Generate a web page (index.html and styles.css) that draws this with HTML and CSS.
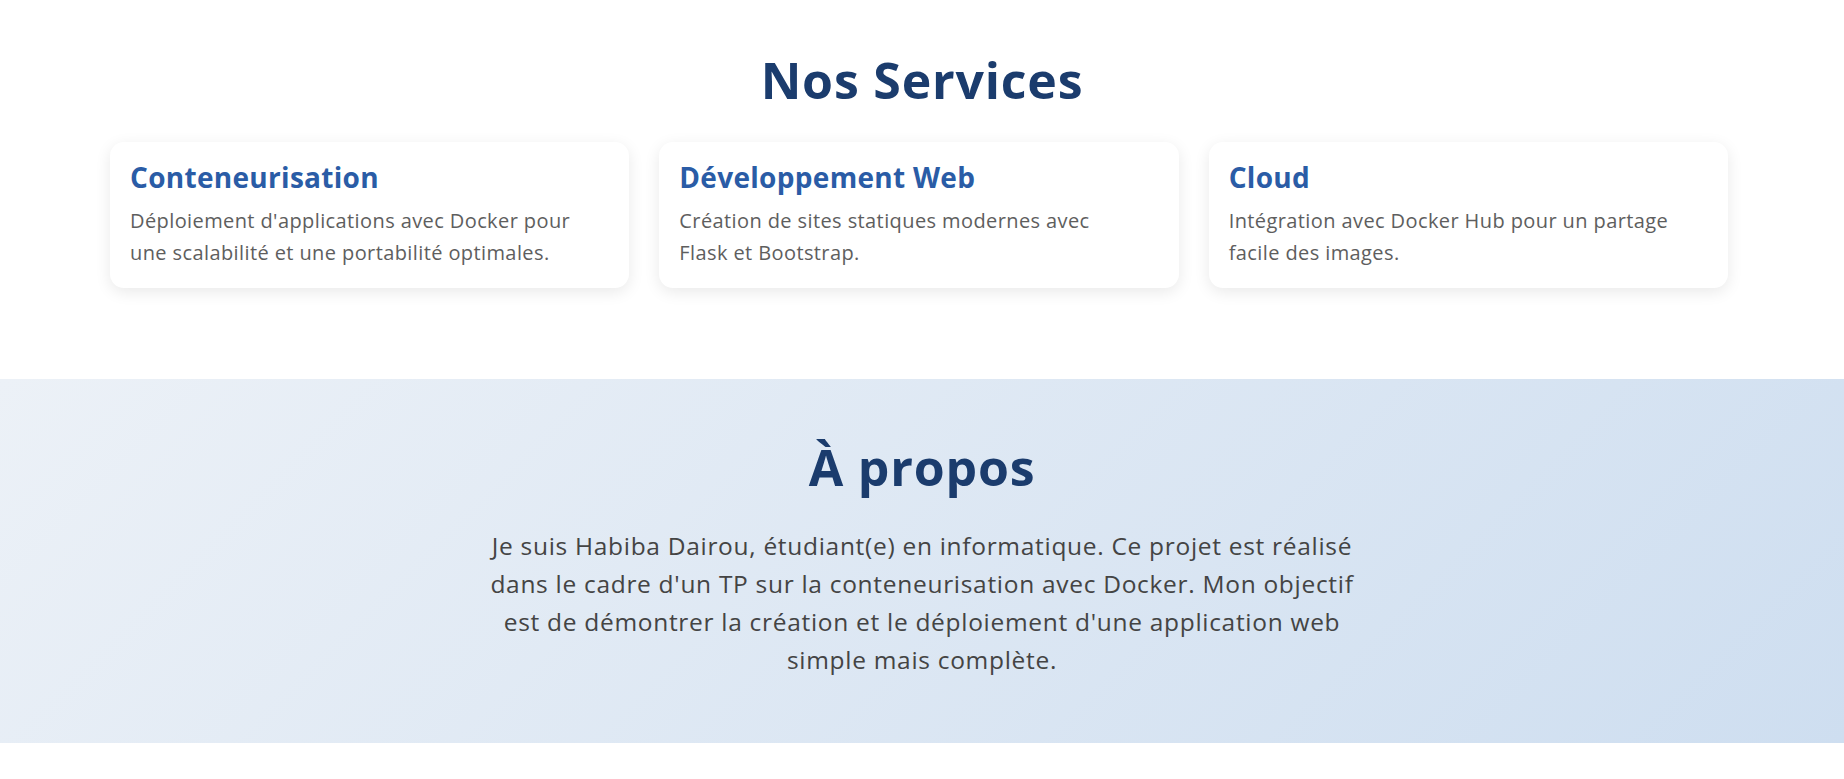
FILE: index.html
```html
<!DOCTYPE html>
<html lang="fr">
<head>
<meta charset="utf-8">
<title>Nos Services</title>
<link rel="stylesheet" href="styles.css">
</head>
<body>
  <section class="services">
    <h2 class="section-title">Nos Services</h2>
    <div class="cards">
      <div class="card">
        <h3 class="card-title">Conteneurisation</h3>
        <p class="card-text">Déploiement d'applications avec Docker pour une scalabilité et une portabilité optimales.</p>
      </div>
      <div class="card">
        <h3 class="card-title">Développement Web</h3>
        <p class="card-text">Création de sites statiques modernes avec Flask et Bootstrap.</p>
      </div>
      <div class="card">
        <h3 class="card-title">Cloud</h3>
        <p class="card-text">Intégration avec Docker Hub pour un partage facile des images.</p>
      </div>
    </div>
  </section>
  <section class="about">
    <h2 class="section-title">À propos</h2>
    <p class="about-text">Je suis Habiba Dairou, étudiant(e) en informatique. Ce projet est réalisé dans le cadre d'un TP sur la conteneurisation avec Docker. Mon objectif est de démontrer la création et le déploiement d'une application web simple mais complète.</p>
  </section>
</body>
</html>
```

FILE: styles.css
```css
* { box-sizing: border-box; }

body {
  margin: 0;
  font-family: "Open Sans", "DejaVu Sans", sans-serif;
  background: #ffffff;
}

.section-title {
  margin: 0;
  font-size: 50px;
  line-height: 60px;
  font-weight: 700;
  letter-spacing: 0.8px;
  color: #1b3c6d;
  text-align: center;
}

.services {
  padding: 50px 0 91px;
}

.cards {
  display: grid;
  grid-template-columns: repeat(3, 1fr);
  gap: 30px;
  margin: 32px 116px 0 110px;
}

.card {
  background: #ffffff;
  border-radius: 14px;
  box-shadow: 0 4px 16px rgba(0, 0, 0, 0.09);
  padding: 18px 38px 19px 20px;
}

.card-title {
  margin: 0 0 11px;
  font-size: 28px;
  line-height: 34px;
  font-weight: 700;
  letter-spacing: 0.3px;
  color: #2a5ca6;
}

.card-text {
  margin: 0;
  font-size: 20px;
  line-height: 32px;
  letter-spacing: 0.4px;
  color: #5e5e5e;
}

.about {
  background: linear-gradient(135deg, #ecf1f7 0%, #cedef0 100%);
  padding: 58px 0 64px;
}

.about-text {
  max-width: 890px;
  margin: 30px auto 0;
  font-size: 24.5px;
  line-height: 38px;
  letter-spacing: 0.7px;
  color: #444444;
  text-align: center;
}
```
